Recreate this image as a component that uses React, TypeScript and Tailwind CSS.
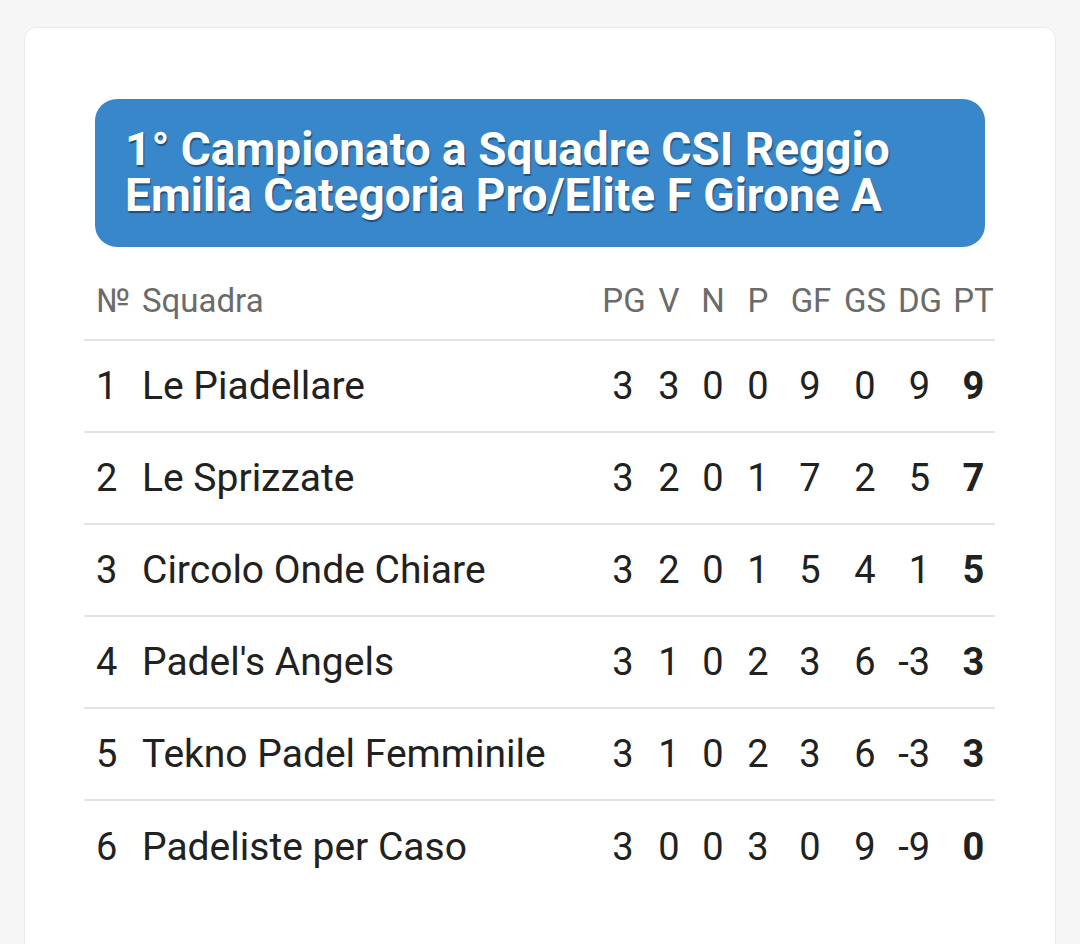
const rows = [
  { pos: 1, name: "Le Piadellare", pg: 3, v: 3, n: 0, p: 0, gf: 9, gs: 0, dg: 9, pt: 9 },
  { pos: 2, name: "Le Sprizzate", pg: 3, v: 2, n: 0, p: 1, gf: 7, gs: 2, dg: 5, pt: 7 },
  { pos: 3, name: "Circolo Onde Chiare", pg: 3, v: 2, n: 0, p: 1, gf: 5, gs: 4, dg: 1, pt: 5 },
  { pos: 4, name: "Padel's Angels", pg: 3, v: 1, n: 0, p: 2, gf: 3, gs: 6, dg: -3, pt: 3 },
  { pos: 5, name: "Tekno Padel Femminile", pg: 3, v: 1, n: 0, p: 2, gf: 3, gs: 6, dg: -3, pt: 3 },
  { pos: 6, name: "Padeliste per Caso", pg: 3, v: 0, n: 0, p: 3, gf: 0, gs: 9, dg: -9, pt: 0 },
];

const font = { fontFamily: "Roboto, 'Noto Sans', sans-serif" };

const App = () => {
  return (
    <div className="w-[1080px] h-[944px] overflow-hidden bg-[#f6f6f6] pt-[27px] pl-[24px] pr-[24px]" style={font}>
      <div className="bg-white border border-[#ebebeb] rounded-[12px] h-[940px] pt-[71px] pl-[70px] pr-[70px]">
        <div className="bg-[#3787ca] rounded-[22px] h-[148px] pl-[30px] pr-[10px] pt-[27px]">
          <h1 className="text-white font-bold text-[46px] leading-[46px] [text-shadow:1px_2px_1px_#1f4f7e]">
            <span className="block">1° Campionato a Squadre CSI Reggio</span>
            <span className="block">Emilia Categoria Pro/Elite F Girone A</span>
          </h1>
        </div>

        <div className="mt-[26px] -ml-[11px] w-[911px]">
          <div className="flex items-center h-[68px] pb-[10px] text-[33px] text-[#6b6b6b] border-b-2 border-[#e3e3e3]">
            <div className="w-[58px] pl-[12px]">№</div>
            <div className="flex-1">Squadra</div>
            <div className="w-[48px] text-center">PG</div>
            <div className="w-[42px] text-center">V</div>
            <div className="w-[46px] text-center">N</div>
            <div className="w-[44px] text-center">P</div>
            <div className="w-[62px] text-center">GF</div>
            <div className="w-[46px] text-center">GS</div>
            <div className="w-[64px] text-center">DG</div>
            <div className="w-[43px] text-center">PT</div>
          </div>
          {rows.map((r, i) => (
            <div
              key={r.pos}
              className={
                i < rows.length - 1
                  ? "flex items-center h-[92px] text-[38px] text-[#212121] border-b-2 border-[#e3e3e3]"
                  : "flex items-center h-[92px] text-[38px] text-[#212121]"
              }
            >
              <div className="w-[58px] pl-[12px]">{r.pos}</div>
              <div className="flex-1 whitespace-nowrap text-[39px]">{r.name}</div>
              <div className="w-[48px] text-center pr-[2px]">{r.pg}</div>
              <div className="w-[42px] text-center">{r.v}</div>
              <div className="w-[46px] text-center">{r.n}</div>
              <div className="w-[44px] text-center">{r.p}</div>
              <div className="w-[62px] text-center pr-[2px]">{r.gf}</div>
              <div className="w-[46px] text-center">{r.gs}</div>
              <div className="w-[64px] text-right pr-[22px]">{r.dg}</div>
              <div className="w-[43px] text-center font-bold">{r.pt}</div>
            </div>
          ))}
        </div>
      </div>
    </div>
  );
};

export default App;
